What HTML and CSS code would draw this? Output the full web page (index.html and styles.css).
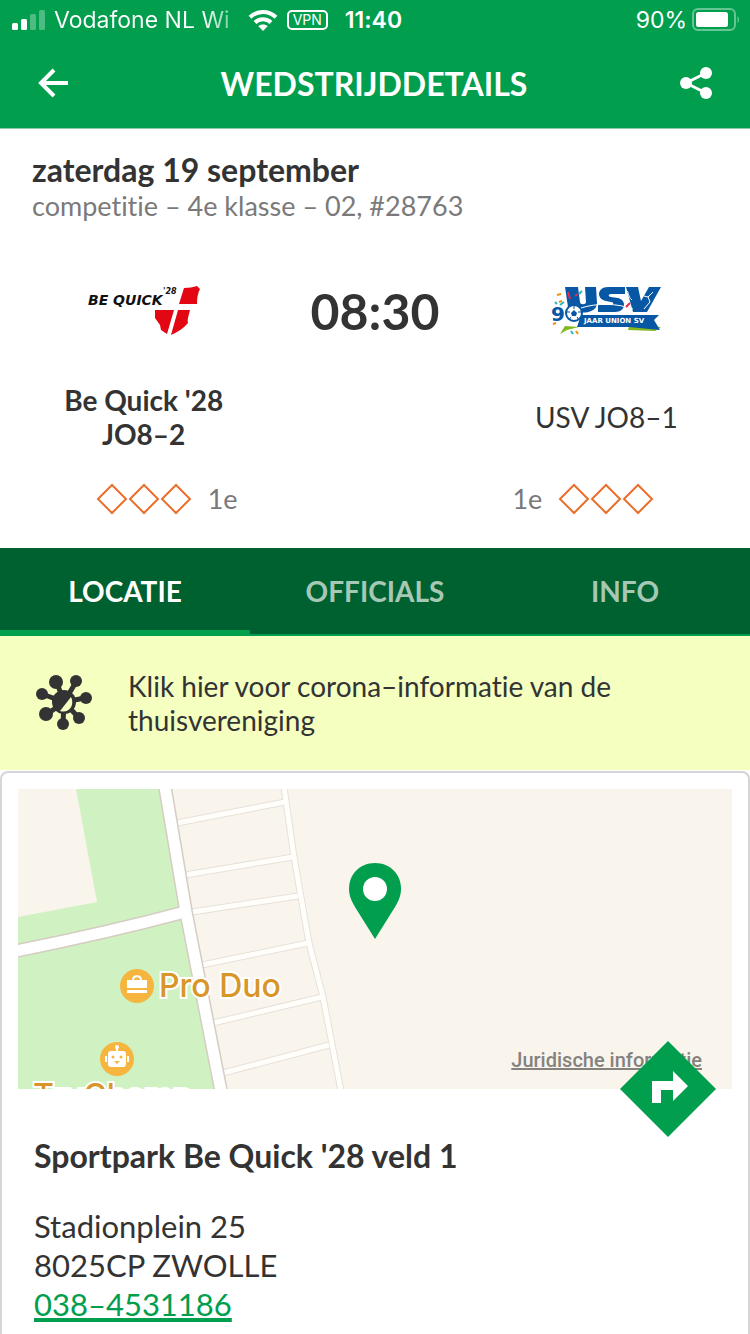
FILE: index.html
```html
<!DOCTYPE html>
<html lang="nl">
  <head>
    <meta charset="UTF-8" />
    <meta name="viewport" content="width=device-width, initial-scale=1.0" />
    <title>Wedstrijddetails</title>
    <link rel="stylesheet" href="styles.css">
  </head>
  <body>
    <header>
      <div class="status">
        <div class="status-left">
          <svg width="34" height="22" viewBox="0 0 34 22" fill="#fff" aria-hidden="true">
            <rect x="0" y="14" width="6" height="7" rx="1.5" />
            <rect x="9" y="10" width="6" height="11" rx="1.5" />
            <rect x="18" y="5" width="6" height="16" rx="1.5" opacity=".3" />
            <rect x="27" y="1" width="6" height="20" rx="1.5" opacity=".3" />
          </svg>
          <span class="carrier">Vodafone NL Wi</span>
          <svg class="wifi" width="30" height="22" viewBox="0 0 30 22" aria-hidden="true">
            <g fill="none" stroke="#fff" stroke-width="4">
              <path d="M2 8.2C9.500 1.200 20.500 1.200 28 8.200" />
              <path d="M7 13.500C11.500 9.300 18.500 9.300 23 13.500" />
            </g>
            <path d="M15 22l-4.800-4.900c2.600-2.300 7-2.300 9.600 0z" fill="#fff" />
          </svg>
          <span class="vpn">VPN</span>
          <time class="clock">11:40</time>
        </div>
        <div class="status-right">
          <span>90%</span>
          <svg width="48" height="24" viewBox="0 0 48 24" aria-hidden="true">
            <rect x="1" y="1" width="42" height="21" rx="5" fill="none" stroke="#fff" stroke-width="2" opacity=".4" />
            <rect x="4" y="4" width="32" height="15" rx="2.500" fill="#fff" />
            <path d="M45.500 8v7c2-1.500 2-5.500 0-7z" fill="#fff" opacity=".4" />
          </svg>
        </div>
      </div>
      <div class="navbar">
        <button class="icon-button" aria-label="Terug">
          <svg width="32" height="32" viewBox="0 0 32 32" fill="none" stroke="#fff" stroke-width="4" aria-hidden="true">
            <path d="M17 2L4 15l13 13M4 15h27" />
          </svg>
        </button>
        <h1>WEDSTRIJDDETAILS</h1>
        <button class="icon-button" aria-label="Delen">
          <svg width="34" height="34" viewBox="0 0 34 34" fill="#fff" aria-hidden="true">
            <path d="M27 6L7 16l20 10" fill="none" stroke="#fff" stroke-width="3" />
            <circle cx="7" cy="16" r="6" />
            <circle cx="27" cy="6" r="6" />
            <circle cx="27" cy="26" r="6" />
          </svg>
        </button>
      </div>
    </header>

    <main>
      <section class="match">
        <h2>zaterdag 19 september</h2>
        <p class="competition">competitie – 4e klasse – 02, #28763</p>

        <div class="teams">
          <svg class="logo" width="112" height="50" viewBox="0 0 112 50" role="img" aria-label="Be Quick '28">
            <g font-family="DejaVu Sans, sans-serif" font-style="italic" font-weight="700" fill="#111">
              <text x="0" y="19" font-size="14">BE QUICK</text>
              <text x="75" y="8" font-size="8">'28</text>
            </g>
            <g fill="#e30613">
              <path d="M96 2c5 0 9-1 13-2l3 3c-2 4-3 8-3 15H91z" />
              <path d="M67 24h19l-7 24-6-4-1-5-5-7z" />
              <path d="M90 24h12c-1 5-3 9-2 13-4 5-10 9-17 12z" />
            </g>
          </svg>
          <time class="kickoff">08:30</time>
          <svg class="logo" width="112" height="50" viewBox="0 0 112 50" role="img" aria-label="USV 90 jaar Union SV">
            <path d="M79 40l32 1-6 4-27-1z" fill="#84b71b" />
            <path d="M10 48l5-8 14 1-12 3z" fill="#84b71b" />
            <g fill="#0757a5">
              <path d="M15 1h13l2 15c0 3 6 3 6 0L35 1h11l1 16c0 12-22 12-29 4z" />
              <path d="M75 1v7H61c-3 0-3 3 0 3l7 1c9 2 8 14-3 14H48v-7h13c3 0 3-3 0-3l-5-1C46 13 47 1 58 1z" />
              <path d="M76 1h12l3 14 8-14h12L97 26H83z" />
              <path d="M31 29h78l-5 5 6 10-31-3H27z" />
            </g>
            <g font-family="DejaVu Sans, sans-serif" font-weight="700">
              <text x="1" y="35" font-size="20" fill="#0757a5">9</text>
              <text x="34" y="37" font-size="7" fill="#fff">JAAR UNION SV</text>
            </g>
            <circle cx="24" cy="27" r="8" fill="#fff" stroke="#0757a5" stroke-width="2" />
            <path d="M24 24l3 3-1 3h-4l-1-3z" fill="#0757a5" />
            <path d="M24 19v4M32 26h-4M27 31l2 3M21 31l-2 3M16 26h4" stroke="#0757a5" />
            <path d="M31 22c15-5 36-5 52 1M76 4c4 3 1 6 6 10M103 6l-5 5 2 5-6 7M98 11l-4-1" fill="none" stroke="#fff" />
            <path d="M18 6l2 7M25 10l3-2M76 21l4-4" stroke="#e52b50" stroke-width="2" />
            <path d="M7 9l4-1M12 15l-3 1M3 38l3-1M26 45l2 3" stroke="#f39200" stroke-width="2" />
            <path d="M10 19l4-3M29 8l3-3M5 16l2 2M21 45l2 3" stroke="#27b8bd" stroke-width="2" />
          </svg>

          <strong class="team-name">Be Quick '28<br>JO8–2</strong>
          <span class="team-name away">USV JO8–1</span>

          <div class="rating">
            <svg width="96" height="32" viewBox="0 0 96 32" aria-hidden="true">
              <path d="M2 16L16 2l14 14-14 14zM34 16L48 2l14 14-14 14zM66 16L80 2l14 14-14 14z" />
            </svg>
            <span>1e</span>
          </div>
          <div class="rating away">
            <span>1e</span>
            <svg width="96" height="32" viewBox="0 0 96 32" aria-hidden="true">
              <path d="M2 16L16 2l14 14-14 14zM34 16L48 2l14 14-14 14zM66 16L80 2l14 14-14 14z" />
            </svg>
          </div>
        </div>
      </section>

      <nav class="tabs">
        <a href="#locatie" class="active">LOCATIE</a>
        <a href="#officials">OFFICIALS</a>
        <a href="#info">INFO</a>
      </nav>

      <a class="notice" href="#corona">
        <svg width="58" height="56" viewBox="0 0 58 56" aria-hidden="true">
          <path d="M28 27L21 8M28 27L40 7M28 27l21-4M28 27L6 19M28 27L10 40M28 27l-1 22M28 27l15 16" stroke="#333" stroke-width="5" />
          <g fill="#333">
            <circle cx="28" cy="27" r="12" />
            <circle cx="20" cy="7" r="7" />
            <circle cx="40" cy="6" r="6" />
            <circle cx="50" cy="23" r="6" />
            <circle cx="6" cy="19" r="6" />
            <circle cx="10" cy="39" r="7" />
            <circle cx="27" cy="49" r="6" />
            <circle cx="43" cy="43" r="6" />
          </g>
          <path d="M35 22c4 8-2 17-11 14z" fill="#f4ffc0" />
        </svg>
        <span>Klik hier voor corona–informatie van de thuisvereniging</span>
      </a>

      <section class="card" id="locatie">
        <div class="map">
          <svg class="map-canvas" viewBox="0 0 714 300" preserveAspectRatio="xMinYMin slice" aria-hidden="true">
            <rect width="714" height="300" fill="#f9f5ed" />
            <path d="M0 0h148l20 123 34 177H0z" fill="#d0f2c2" />
            <path d="M0 0h58l21 113-79 15z" fill="#f9f5ed" />

            <!-- paths between the fields, outline first -->
            <g fill="none" stroke="#e6e1da" stroke-width="7">
              <path d="M266-2l10 70 15 86 14 54 18 94" />
              <path d="M159 34l108-21M167 86l108-18M174 123l106-16M184 176l106-22M195 234l109-26M205 284l106-28" />
            </g>
            <g fill="none" stroke="#fffefa" stroke-width="5">
              <path d="M266-2l10 70 15 86 14 54 18 94" />
              <path d="M159 34l108-21M167 86l108-18M174 123l106-16M184 176l106-22M195 234l109-26M205 284l106-28" />
            </g>

            <!-- roads -->
            <g fill="none" stroke="#d5cdc2" stroke-width="14">
              <path d="M147-2l21 125 35 179" />
              <path d="M-2 162q90-18 169-39" />
            </g>
            <g fill="none" stroke="#fff" stroke-width="11">
              <path d="M147-2l21 125 35 179" />
              <path d="M-2 162q90-18 169-39" />
            </g>

            <circle cx="119" cy="197" r="17" fill="#f6b53f" />
            <path d="M109 191h20v8h-20zM109 201h20v3h-20z" fill="#fff" />
            <path d="M115 191c0-5 8-5 8 0" fill="none" stroke="#fff" stroke-width="2" />

            <circle cx="99" cy="270" r="17" fill="#f6b53f" />
            <rect x="90" y="262" width="18" height="16" rx="3" fill="#fff" />
            <path d="M87 267h2v6h-2zM109 267h2v6h-2zM98 258h2v4h-2z" fill="#fff" />
            <circle cx="99" cy="258" r="2" fill="#fff" />
            <g fill="#f6b53f">
              <circle cx="95" cy="268" r="1.500" />
              <circle cx="103" cy="268" r="1.500" />
              <path d="M96 272h6l-3 3z" />
            </g>

            <g class="map-label">
              <text x="141" y="208">Pro Duo</text>
              <text x="15" y="318">TryChamp</text>
            </g>
          </svg>
          <svg class="pin" width="52" height="76" viewBox="0 0 52 76" role="img" aria-label="Sportpark">
            <path d="M26 0C11 0 0 11 0 26c0 7 3 13 6 18l20 32 20-32c3-5 6-11 6-18C52 11 41 0 26 0z" fill="#009e4d" />
            <circle cx="26" cy="26" r="12" fill="#fff" />
          </svg>
          <a class="legal" href="#juridisch">Juridische informatie</a>
          <button class="route" aria-label="Route">
            <svg width="96" height="96" viewBox="0 0 96 96" aria-hidden="true">
              <path d="M48 0l48 48-48 48L0 48z" fill="#009e4d" />
              <path d="M32 62V40h21V30l15 15-15 15V49H41v13z" fill="#fff" />
            </svg>
          </button>
        </div>

        <div class="venue">
          <h3>Sportpark Be Quick '28 veld 1</h3>
          <address>
            Stadionplein 25<br>
            8025CP ZWOLLE<br>
            <a href="tel:0384531186">038–4531186</a>
          </address>
        </div>
      </section>
    </main>
  </body>
</html>
```

FILE: styles.css
```css
* {
  box-sizing: border-box;
}

body {
  display: flex;
  flex-direction: column;
  min-height: 100vh;
  margin: 0;
  font-family: Lato, sans-serif;
  font-size: 28px;
  font-variant-ligatures: none;
  line-height: 34px;
  color: #333;
  background: white;
}

h1,
h2,
h3,
p {
  margin: 0;
}

svg {
  display: block;
  flex-shrink: 0;
}

button {
  padding: 0;
  border: 0;
  background: none;
  cursor: pointer;
}

header {
  color: white;
  background: #009e4d;
  border-bottom: 1px solid #8fc9a8;
}

.status {
  display: flex;
  justify-content: space-between;
  height: 40px;
  padding: 0 10px 0 12px;
  font-family: Inter, sans-serif;
  font-size: 23px;
}

.status-left,
.status-right {
  display: flex;
  align-items: center;
}

.status-right {
  gap: 5px;
}

.carrier {
  margin-left: 8px;
  background: linear-gradient(to right, white 85%, #7fcea6);
  background-clip: text;
  -webkit-background-clip: text;
  color: transparent;
}

.wifi {
  margin-left: 18px;
}

.vpn {
  margin: 0 17px 0 9px;
  padding: 0 4px;
  border: 2px solid white;
  border-radius: 5px;
  font-size: 14px;
  line-height: 16px;
}

.clock {
  font-weight: 600;
}

.navbar {
  display: flex;
  justify-content: space-between;
  align-items: center;
  height: 88px;
  padding: 0 37px;
}

h1,
h2,
h3 {
  font-size: 32px;
  line-height: 38px;
}

.match {
  padding: 22px 32px 28px;
}

.competition {
  font-size: 27px;
}

.competition,
.rating {
  color: #7a7a7a;
}

.teams {
  display: grid;
  grid-template-columns: 1fr 1fr 1fr;
  grid-template-rows: 90px 122px 42px;
  place-items: center;
  margin: 43px -4px 0;
}

.kickoff {
  font-size: 50px;
  font-weight: 700;
}

.team-name {
  text-align: center;
}

.away {
  grid-column: 3;
}

/* the diamonds stay centred under the team, the class hangs beside them */
.rating {
  display: grid;
  grid-template-columns: 1fr auto 1fr;
  align-items: center;
  gap: 16px;
  font-size: 27px;
}

.rating svg {
  grid-column: 2;
}

.rating path {
  fill: none;
  stroke: #e9702c;
  stroke-width: 2;
}

.tabs {
  display: grid;
  grid-template-columns: 1fr 1fr 1fr;
  height: 88px;
  background: #006130;
  border-bottom: 2px solid #009e4d;
}

.tabs a {
  display: flex;
  justify-content: center;
  align-items: center;
  padding-top: 3px;
  border-bottom: 4px solid transparent;
  font-weight: 700;
  text-decoration: none;
  color: #a6c8b5;
}

.tabs .active {
  color: white;
  border-color: #009e4d;
}

.notice {
  display: flex;
  align-items: center;
  gap: 34px;
  min-height: 134px;
  padding: 0 36px;
  text-decoration: none;
  color: #333;
  background: #f4ffc0;
}

main {
  display: flex;
  flex: 1;
  flex-direction: column;
}

.card {
  flex: 1;
  margin-top: 1px;
  padding: 16px 16px 0;
  border: 2px solid #d6d6d8;
  border-bottom: 0;
  border-radius: 8px 8px 0 0;
}

.map {
  position: relative;
  display: flex;
  justify-content: center;
  height: 300px;
}

.map-canvas {
  flex: 1;
  width: 100%;
  height: 100%;
}

.map-label {
  font-family: Inter, sans-serif;
  font-size: 32px;
  font-weight: 500;
  fill: #d8962a;
  stroke: white;
  stroke-width: 4px;
  paint-order: stroke;
}

.pin {
  position: absolute;
  bottom: 50%;
}

.legal {
  position: absolute;
  right: 30px;
  bottom: 12px;
  font-family: Roboto, sans-serif;
  font-size: 20px;
  font-weight: 500;
  color: #85827e;
  text-decoration-thickness: 2px;
}

.route {
  position: absolute;
  right: 16px;
  bottom: -48px;
}

.venue {
  padding: 48px 16px 0;
}

address {
  margin-top: 32px;
  font-size: 31px;
  font-style: normal;
  line-height: 39px;
}

address a {
  color: #009e4d;
  text-decoration-thickness: 4px;
}
```
